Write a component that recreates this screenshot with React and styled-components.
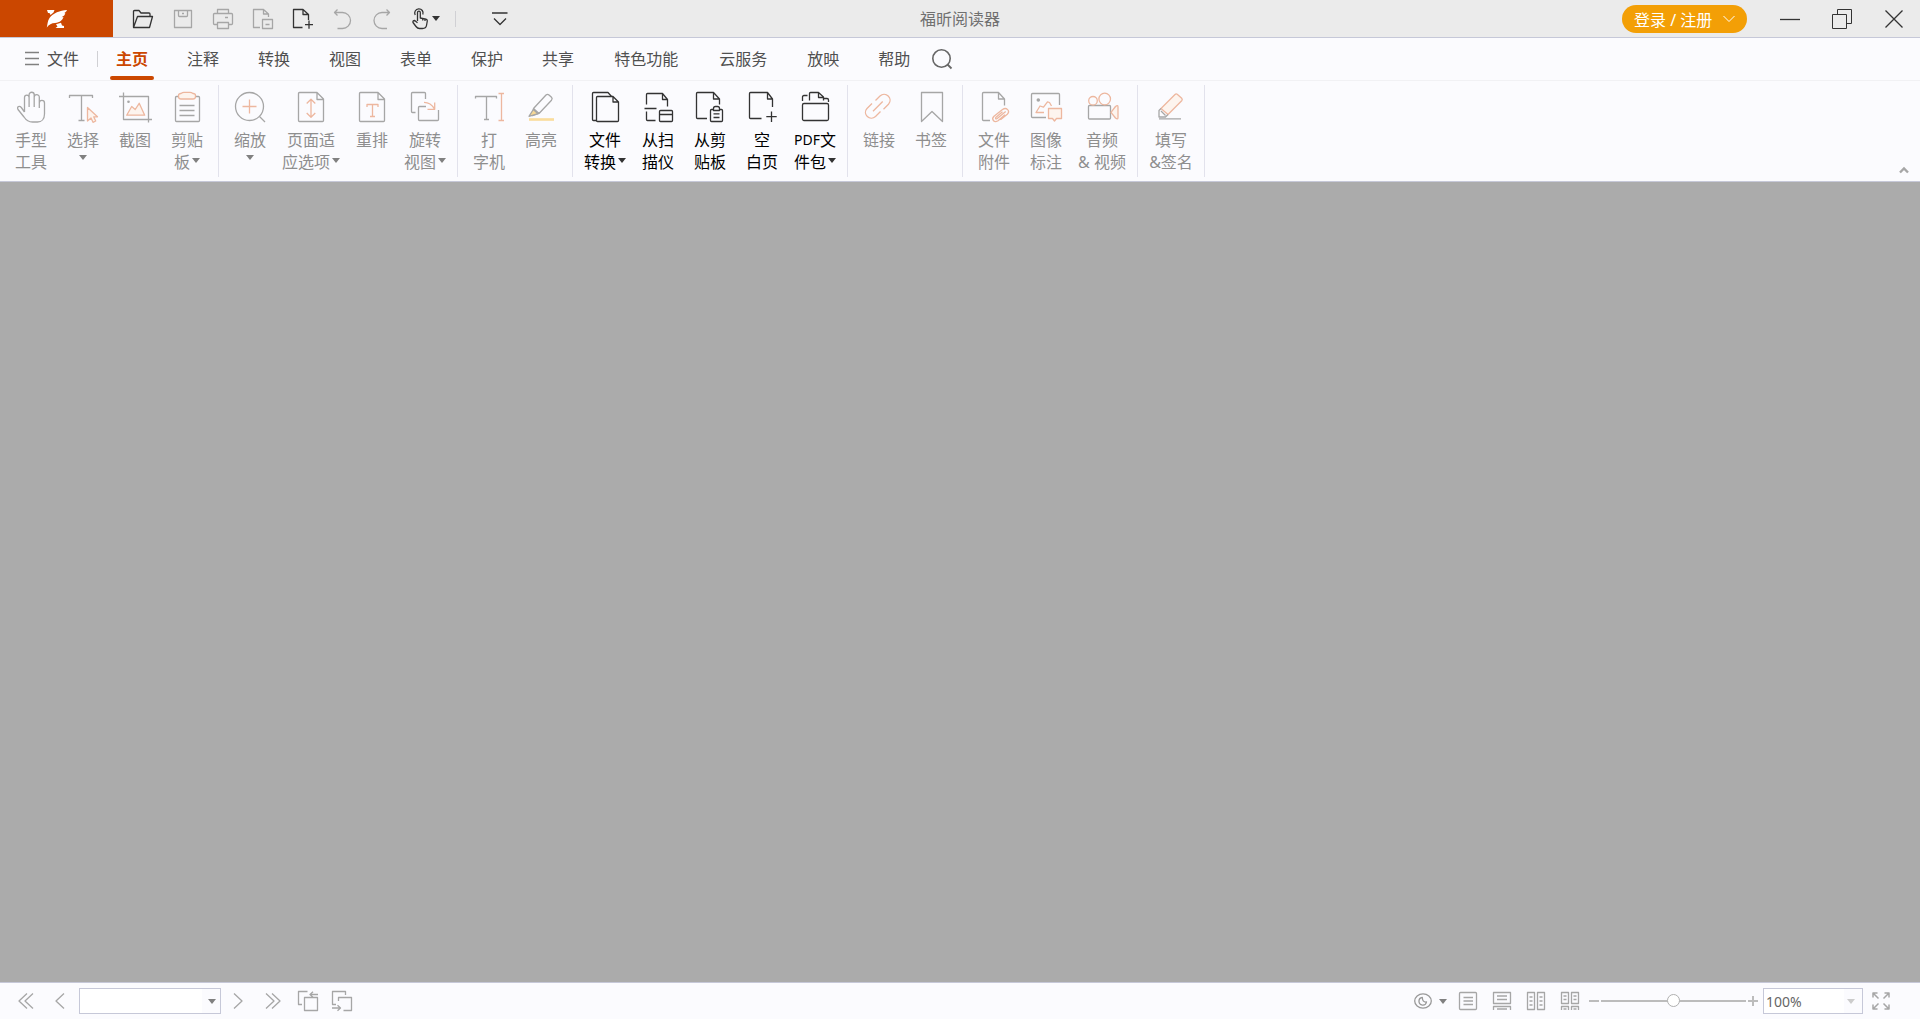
// Librairies.
import React, { useState } from 'react';
import styled, { createGlobalStyle, css } from 'styled-components';


// Colors.
const grey   = '#a6a6a6';
const dark   = '#333333';
const peach  = '#edb79f';
const cream  = '#fdf4ee';
const orange = '#cb4700';
const line   = '#c6c8d8';


// Global Style.
const GlobalStyle = createGlobalStyle`
    * {
        box-sizing: border-box;
    }

    body {
        margin     : 0;
        font-family: "Noto Sans", "Noto Sans CJK SC", sans-serif;
        font-size  : 16px;
        font-weight: 400;
    }
`;


// Styled Components.
const StyledApp = styled.div`
    display       : flex;
    flex-direction: column;
    height        : 100vh;
    background    : #ababab;
`;

const plainButton = css`
    display        : flex;
    align-items    : center;
    justify-content: center;
    padding        : 0;
    border         : 0;
    background     : none;
    color          : inherit;
    font           : inherit;
    white-space    : nowrap;
    cursor         : pointer;
`;

const StyledSvg = styled.svg`
    display        : block;
    flex           : none;
    width          : ${props => props.$w}px;
    height         : ${props => props.$h}px;
    overflow       : visible;
    fill           : none;
    stroke         : ${props => props.$color};
    stroke-width   : 1.3;
    stroke-linejoin: round;
`;

const StyledTitleBar = styled.header`
    display              : grid;
    grid-template-columns: 1fr auto 1fr;
    height               : 38px;
    border-bottom        : 1px solid ${line};
    background           : #ebebeb;
`;

const StyledQuickAccess = styled.div`
    display    : flex;
    align-items: center;
`;

const StyledLogo = styled.div`
    display        : flex;
    align-items    : center;
    justify-content: center;
    align-self     : stretch;
    width          : 113px;
    margin-right   : 10px;
    background     : ${orange};
`;

const StyledToolButton = styled.button`
    ${plainButton}
    width : ${props => props.$width || 40}px;
    height: 36px;
    gap   : ${props => props.$gap || 0}px;
`;

const StyledDivider = styled.span`
    width     : 1px;
    height    : 16px;
    margin    : ${props => props.$margin};
    background: #d0d0d4;
`;

const StyledTitle = styled.h1`
    margin     : 0;
    align-self : center;
    color      : #707070;
    font-size  : 16px;
    font-weight: 400;
    line-height: 24px;
`;

const StyledWindow = styled.div`
    display        : flex;
    align-items    : center;
    justify-content: flex-end;
`;

const StyledLogin = styled.button`
    ${plainButton}
    justify-content: flex-start;
    gap            : 11px;
    height         : 28px;
    width          : 125px;
    padding-left   : 12px;
    margin-right   : 17px;
    border-radius  : 14px;
    background     : #f39f06;
    color          : white;
`;

const StyledMenu = styled.nav`
    display      : flex;
    align-items  : center;
    height       : 43px;
    border-bottom: 1px solid #f1f1f4;
    background   : #fbfbfe;
    color        : #505050;
`;

const StyledFile = styled.button`
    ${plainButton}
    gap           : 8px;
    height        : 42px;
    padding-bottom: 2px;
    margin-left   : 25px;
`;

const StyledTabs = styled.div`
    display: flex;
    gap    : 27px;
`;

const StyledTab = styled.button`
    ${plainButton}
    position   : relative;
    height     : 42px;
    padding    : 0 ${props => props.$long ? 7 : 6}px 2px;
    color      : ${props => props.$active ? orange : 'inherit'};
    font-weight: ${props => props.$active ? 700 : 400};

    &::after {
        content      : '';
        display      : ${props => props.$active ? 'block' : 'none'};
        position     : absolute;
        left         : 0;
        right        : 0;
        bottom       : 0;
        height       : 4px;
        border-radius: 2px;
        background   : ${orange};
    }
`;

const StyledRibbon = styled.section`
    display      : flex;
    height       : 101px;
    border-bottom: 1px solid ${line};
    background   : #fbfbfe;
`;

const StyledGroup = styled.div`
    display     : flex;
    margin      : 4px 0;
    padding     : 0 5px;
    border-right: 1px solid #e2e2ec;
    height      : 92px;
`;

const StyledItem = styled.button`
    ${plainButton}
    flex           : none;
    flex-direction : column;
    justify-content: flex-start;
    width          : ${props => props.$width || 52}px;
    padding-top    : 6px;
    color          : ${props => props.$enabled ? '#000000' : '#8e8e8e'};
`;

const StyledLines = styled.span`
    display       : flex;
    flex-direction: column;
    align-items   : center;
    padding-top   : 6px;
`;

const StyledLine = styled.span`
    display    : flex;
    align-items: center;
    gap        : 2px;
    height     : 22px;
    line-height: 22px;

    > svg {
        margin-bottom: 3px;
    }
`;

const StyledLatin = styled.span`
    margin-right: -2px;
    font-size   : 14px;
`;

const StyledLoneArrow = styled.span`
    padding-top: 4px;
`;

const StyledCollapse = styled.button`
    ${plainButton}
    align-self: flex-end;
    width     : 32px;
    height    : 22px;
    margin    : 0 0 0 auto;
`;

const StyledWorkspace = styled.main`
    flex: 1;
`;

const StyledStatusBar = styled.footer`
    display        : flex;
    align-items    : center;
    justify-content: space-between;
    height         : 37px;
    padding        : 0 21px 0 9px;
    border-top     : 1px solid ${line};
    background     : #fbfbfe;
`;

const StyledStatusGroup = styled.div`
    display    : flex;
    align-items: center;
`;

const StyledCombo = styled.div`
    display    : grid;
    align-items: center;
    width      : ${props => props.$width}px;
    height     : 26px;
    margin-left: ${props => props.$left}px;
    border     : 1px solid ${line};
    background : linear-gradient(to left, #fbfbfe 18px, white 18px);

    > * {
        grid-area: 1 / 1;
    }

    > svg {
        justify-self  : end;
        margin-right  : ${props => props.$arrow}px;
        pointer-events: none;
    }
`;

const StyledSelect = styled.select`
    appearance : none;
    width      : 100%;
    height     : 24px;
    padding    : 0 2px;
    border     : 0;
    background : transparent;
    color      : #666666;
    font-family: inherit;
    font-size  : 14px;
`;

const StyledRange = styled.input`
    appearance: none;
    width     : 145px;
    height    : 14px;
    margin    : 0;
    background: transparent;

    &::-webkit-slider-runnable-track {
        height    : 2px;
        background: #bcbcbc;
    }

    &::-webkit-slider-thumb {
        appearance   : none;
        width        : 13px;
        height       : 13px;
        margin-top   : -6px;
        border       : 1px solid #b0b0b0;
        border-radius: 50%;
        background   : white;
    }
`;


// Icône générique.
function Icon({ w = 34, h = 32, color = grey, children }) {
    return (
        <StyledSvg $w={w} $h={h} $color={color} viewBox={`0 0 ${w} ${h}`} aria-hidden='true'>
            {children}
        </StyledSvg>
    );
}

function Arrow({ color = '#808080' }) {
    return (
        <Icon w={8} h={5} color='none'>
            <path d='M0 0H8L4 5Z' fill={color} />
        </Icon>
    );
}

// Page avec un coin plié.
const page = 'M23 1.5H5.5A1 1 0 0 0 4.5 2.5V29.5A1 1 0 0 0 5.5 30.5H28.5A1 1 0 0 0 29.5 29.5V8L23 1.5V8.5H29.5';

// Icônes du ruban.
const icons = {
    hand: <path d='M10.5 21V6.5A2.3 2.3 0 0 1 15.1 6.5V16M15.1 16V3.8A2.5 2.5 0 0 1 20.2 3.8V16M20.2 6.2A2.5 2.5 0 0 1 25.3 6.2V17M25.3 12A2.6 2.6 0 0 1 30.5 12V23C30.5 28 27.5 31 23.5 31H18.5C14.5 31 12 29 10 26L4 18.5C2.5 15.5 5.5 14.5 7.3 16.5L10.5 21' />,
    select: <>
        <path d='M3.5 7V4.5H26.5V7M15.5 4.5V29.5M12.5 29.5H18.5' />
        <path d='M21.5 16.5V30L25 27L27 31.3L29.7 30L27.7 25.8H31.5Z' stroke={peach} fill={cream} />
    </>,
    crop: <>
        <path d='M1 5.5H30.5V31.5M5.5 1.5V28.5H34' />
        <circle cx='10.5' cy='10.7' r='1.3' fill={grey} stroke='none' />
        <path d='M8.7 24.2L13.7 15.5L17.2 18.5L21.2 12.3L26.7 24.2Z' stroke={peach} fill={cream} />
    </>,
    clipboard: <>
        <rect x='5.5' y='5.5' width='24' height='25' rx='1' />
        <path d='M9.5 14.5H24.5M9.5 19.5H24.5M9.5 24.5H24.5' />
        <path d='M8.5 4.5Q8.5 2.5 11 2.5Q12.5 1.3 14 1.3H20Q21.5 1.3 23 2.5Q25.5 2.5 25.5 4.5V5.5Q25.5 8 23 8H11Q8.5 8 8.5 5.5Z' stroke={peach} fill={cream} />
    </>,
    zoom: <>
        <circle cx='16.5' cy='15.5' r='14' />
        <path d='M26.5 25.5L32 31' />
        <path d='M16.5 8.5V22.5M9.5 15.5H23.5' stroke={peach} />
    </>,
    fit: <>
        <path d={page} />
        <path d='M17 8.5V26M12.7 12.5L17 8.3L21.3 12.5M12.7 22L17 26.2L21.3 22' stroke={peach} />
    </>,
    reflow: <>
        <path d={page} />
        <path d='M12 16V13.5H23V16M17.5 13.5V25.5M15 25.5H20' stroke={peach} />
    </>,
    rotate: <>
        <path d='M7.5 21.5H4.5A1 1 0 0 1 3.5 20.5V2.5A1 1 0 0 1 4.5 1.5H16.5A1 1 0 0 1 17.5 2.5V8M18 15.5H11.5A1 1 0 0 0 10.5 16.5V28.5A1 1 0 0 0 11.5 29.5H29.5A1 1 0 0 0 30.5 28.5V19' />
        <path d='M16 11.3C21 11.3 24 13.5 26.5 18M19.5 18.3H26.7V11.5' stroke={peach} />
    </>,
    typewriter: <>
        <path d='M3.5 7.5V5.5H24.5V7.5M14.5 5.5V28.5M12 28.5H17' />
        <path d='M29.5 2.5V29.5M26.5 2.5H32M26.5 29.5H32' stroke={peach} />
    </>,
    highlight: <>
        <path d='M9.5 17.5L22 4Q23.5 2.7 25 4L27.5 6.3Q28.8 7.6 27.5 9.2L15 22.5L8.5 24.7L9.5 17.5L15 22.5' />
        <path d='M9.3 18.5L5 25.3L14 22.7Z' fill='#f6d896' />
        <path d='M5 28.5H30' stroke='#fadd9c' strokeWidth='2.6' />
    </>,
    convert: <>
        <path d='M8.5 29.5H5.5A1 1 0 0 1 4.5 28.5V2.5A1 1 0 0 1 5.5 1.5H20L23.5 5.5' />
        <path d='M25 5.5H9.5A1 1 0 0 0 8.5 6.5V29.5A1 1 0 0 0 9.5 30.5H29.5A1 1 0 0 0 30.5 29.5V11L25 5.5V11H30.5' />
    </>,
    scanner: <>
        <path d='M5.5 13.5V3.5A1 1 0 0 1 6.5 2.5H21.5L26.5 8.5V15.5M21.5 2.5V8.5H26.5M3.5 17.5H15.5M5.5 20.5V28.5A1 1 0 0 0 6.5 29.5H14.5' />
        <path d='M18.5 20.5A1 1 0 0 1 19.5 19.5H30.5A1 1 0 0 1 31.5 20.5V29.5A1 1 0 0 1 30.5 30.5H19.5A1 1 0 0 1 18.5 29.5ZM18.5 23.5H31.5' />
    </>,
    paste: <>
        <path d='M14 27.5H4.5A1 1 0 0 1 3.5 26.5V2.5A1 1 0 0 1 4.5 1.5H20.5L26.5 8V13.5M20.5 1.5V8H26.5' />
        <path d='M20.5 18.5H18.5A1 1 0 0 0 17.5 19.5V29.5A1 1 0 0 0 18.5 30.5H28.5A1 1 0 0 0 29.5 29.5V19.5A1 1 0 0 0 28.5 18.5H26.5M20.5 19.5V17.5Q20.5 15.5 22.5 15.5H24.5Q26.5 15.5 26.5 17.5V19.5ZM20.5 22.8H26.5M20.5 26.5H26.5' />
    </>,
    blank: <path d='M16.5 27.5H5.5A1 1 0 0 1 4.5 26.5V2.5A1 1 0 0 1 5.5 1.5H22.5L27.5 8V16M22.5 1.5V8H27.5M26.5 20.5V31M21.3 25.7H31.7' />,
    portfolio: <>
        <rect x='4.5' y='12.5' width='26' height='17' rx='1.5' />
        <path d='M4.5 10V6Q4.5 4.5 6 4.5H9.5M11.5 9.5V2.5A1 1 0 0 1 12.5 1.5H20.5L25.5 6V9.5M20.5 1.5V6.5H25.5M26 7.5H29Q30.5 7.5 30.5 9V11' />
    </>,
    link: <path d='M10 12.5L5 17.5C0 23 8 30.5 13.5 25.5L18.5 20.5M13.5 9.5L18 5C23.5 0 31.5 7.5 26.5 13.2L21.5 18.2M11 20.2L20.7 10.5' stroke={peach} />,
    bookmark: <path d='M7.5 1.5H28.5V30.5L18 20.5L7.5 30.5Z' />,
    attach: <>
        <path d='M13 29.5H6.5A1 1 0 0 1 5.5 28.5V2.5A1 1 0 0 1 6.5 1.5H21.5L27.5 8V14.5M21.5 1.5V8H27.5' />
        <path d='M28 23.7L21 29.7C17 32.3 14 28 17 25.2L25.5 18.5C29.5 15.7 33.5 20 30.3 23.2L23.5 28.7M28.7 20.5L20.2 27.5C18.7 28.5 18 27.3 19 26.2L25.5 20.8' stroke={peach} />
    </>,
    image: <>
        <path d='M17 26.5H3.5A1 1 0 0 1 2.5 25.5V3.5A1 1 0 0 1 3.5 2.5H29.5A1 1 0 0 1 30.5 3.5V14' />
        <circle cx='9.3' cy='9' r='1.8' fill={grey} stroke='none' />
        <path d='M15 21.5H7L11 15L14.5 16.2L18.5 10.8L20.5 11.5L22.5 15' stroke={peach} />
        <path d='M19.5 17.5H32.5V27.5H27.5L25.5 30L23.5 27.5H19.5Z' stroke={peach} fill={cream} />
    </>,
    video: <>
        <rect x='3.5' y='14.5' width='22' height='13.5' rx='1' />
        <circle cx='8' cy='9.8' r='4.3' stroke={peach} />
        <circle cx='19.7' cy='8' r='5.8' stroke={peach} />
        <path d='M26 21.3L30.5 15.5Q33 13.5 33 16V26.5Q33 29 30.5 27Z' stroke={peach} fill={cream} />
    </>,
    sign: <>
        <path d='M7 17.5L21 3.5Q22.2 2.3 23.5 3.5L27.7 7.3Q28.8 8.5 27.7 9.7L14 23.5Z' stroke={peach} fill={cream} />
        <path d='M7 17.5L5 19.5V26H11.5L14 23.5M7 20L11.5 24.5M5 27.8H27' />
    </>,
};

// Données du ruban.
const groups = [
    [
        { icon: 'hand', lines: ['手型', '工具'] },
        { icon: 'select', lines: ['选择'], arrow: true },
        { icon: 'crop', lines: ['截图'] },
        { icon: 'clipboard', lines: ['剪贴', '板'], arrow: true },
    ],
    [
        { icon: 'zoom', lines: ['缩放'], arrow: true },
        { icon: 'fit', lines: ['页面适', '应选项'], arrow: true, width: 70 },
        { icon: 'reflow', lines: ['重排'] },
        { icon: 'rotate', lines: ['旋转', '视图'], arrow: true, width: 54 },
    ],
    [
        { icon: 'typewriter', lines: ['打', '字机'] },
        { icon: 'highlight', lines: ['高亮'] },
    ],
    [
        { icon: 'convert', lines: ['文件', '转换'], arrow: true, width: 54, enabled: true },
        { icon: 'scanner', lines: ['从扫', '描仪'], enabled: true },
        { icon: 'paste', lines: ['从剪', '贴板'], enabled: true },
        { icon: 'blank', lines: ['空', '白页'], enabled: true },
        { icon: 'portfolio', lines: [<><StyledLatin>PDF</StyledLatin>文</>, '件包'], arrow: true, width: 54, enabled: true },
    ],
    [
        { icon: 'link', lines: ['链接'] },
        { icon: 'bookmark', lines: ['书签'] },
    ],
    [
        { icon: 'attach', lines: ['文件', '附件'] },
        { icon: 'image', lines: ['图像', '标注'] },
        { icon: 'video', lines: ['音频', '& 视频'], width: 60 },
    ],
    [
        { icon: 'sign', lines: ['填写', '&签名'], width: 56 },
    ],
];

const tabs = ['主页', '注释', '转换', '视图', '表单', '保护', '共享', '特色功能', '云服务', '放映', '帮助'];

// Barre d'accès rapide.
const quickTools = [
    { label: '打开', color: dark, d: 'M1.5 19V3.5A1 1 0 0 1 2.5 2.5H7L9 5H17A1 1 0 0 1 18 6V8.5M1.5 19.5L5.5 8.5H20.5L17.5 19.5Z' },
    { label: '保存', d: 'M2.5 2.5H19.5V19.5H2.5ZM6.5 2.5V7.5A1 1 0 0 0 7.5 8.5H14.5A1 1 0 0 0 15.5 7.5V2.5M10 5.5H12' },
    { label: '打印', d: 'M5.5 16.5H2.5A1 1 0 0 1 1.5 15.5V6.5A1 1 0 0 1 2.5 5.5H19.5A1 1 0 0 1 20.5 6.5V15.5A1 1 0 0 1 19.5 16.5H16.5M5.5 5.5V1.5H16.5V5.5M5.5 14.5H16.5V20.5H5.5ZM13 9.5H16' },
    { label: '另存', d: 'M8 19.5H1.5V1.5H11.5L16.5 6V9M11.5 1.5V6H16.5M10.5 11.5H20.5V20.5H10.5ZM13.5 16.5H17.5' },
    { label: '新建', color: dark, d: 'M10.5 19.5H1.5V1.5H11L16.5 6.5V12M11 1.5V6.5H16.5M17 12.5V20.7M13 16.7H21' },
    { label: '撤销', d: 'M5.5 1.5L2.5 4.5L5.5 7.5M2.5 4.5H10.5A8 8 0 0 1 10.5 20.5H5.5' },
    { label: '重做', d: 'M14.5 1.5L17.5 4.5L14.5 7.5M17.5 4.5H10A8 8 0 0 0 10 20.5H15' },
];

// Vues de page de la barre d'état.
const views = [
    { label: '单页', d: 'M2.5 1.5H17.5Q18.5 1.5 18.5 2.5V17.5Q18.5 18.5 17.5 18.5H2.5Q1.5 18.5 1.5 17.5V2.5Q1.5 1.5 2.5 1.5ZM5.5 6.5H15M5.5 10H15M5.5 13.5H15' },
    { label: '连续', d: 'M1.5 1.5H18.5V12.5H1.5ZM5 5H15M5 8.5H15M1.5 19V15.5H18.5V19M5 18H15' },
    { label: '双页', d: 'M1.5 1.5H8.5V18.5H1.5ZM11.5 1.5H18.5V18.5H11.5ZM3.5 6H6.5M3.5 10H6.5M3.5 14H6.5M13.5 6H16.5M13.5 10H16.5M13.5 14H16.5' },
    { label: '双页连续', d: 'M1.5 1.5H8.5V12.5H1.5ZM11.5 1.5H18.5V12.5H11.5ZM3.5 5H6.5M3.5 8.5H6.5M13.5 5H16.5M13.5 8.5H16.5M1.5 19V15.5H8.5V19M11.5 19V15.5H18.5V19M3.5 18H6.5M13.5 18H16.5' },
];


// Un bouton du ruban.
function RibbonItem({ item }) {
    const last = item.lines.length - 1;

    return (
        <StyledItem $width={item.width} $enabled={item.enabled}>
            <Icon color={item.enabled ? dark : grey}>{icons[item.icon]}</Icon>
            <StyledLines>
                {item.lines.map((text, index) => (
                    <StyledLine key={index}>
                        {text}
                        {item.arrow && last > 0 && index === last &&
                        <Arrow color={item.enabled ? dark : undefined} />
                        }
                    </StyledLine>
                ))}
                {item.arrow && last === 0 &&
                <StyledLoneArrow><Arrow /></StyledLoneArrow>
                }
            </StyledLines>
        </StyledItem>
    );
}


// Application.
function App() {

    // State
    const [activeTab, setActiveTab] = useState('主页');
    const [zoom, setZoom]           = useState(50);

    // Render
    return (
        <StyledApp>
            <GlobalStyle />

            <StyledTitleBar>
                <StyledQuickAccess>
                    <StyledLogo>
                        <Icon w={22} h={20} color='none'>
                            <path fill='white' d='M1 1H8.5L7.5 3.5L4.5 6L3.5 4H2ZM21 1C14 1.5 7 4 3.5 9C1.5 12 1.5 15.5 .8 18.5C3 15.5 5.5 14.2 9 14C14 13.5 16.5 11 17.5 8L15.5 8.3C18 7 19 6 19.3 4L18 4.2C19.5 3.2 20.5 2.5 21 1ZM10 15.3L15 13.8L16 16.5L18 17V19H9.5L11.5 17.5Z' />
                        </Icon>
                    </StyledLogo>
                    {quickTools.map(tool => (
                        <StyledToolButton key={tool.label} aria-label={tool.label}>
                            <Icon w={22} h={22} color={tool.color}><path d={tool.d} /></Icon>
                        </StyledToolButton>
                    ))}
                    <StyledToolButton aria-label='手型' $width={44}>
                        <Icon w={22} h={22} color={dark}>
                            <path d='M7.5 13V4.5A1.4 1.4 0 0 1 10.3 4.5V10L16 11.2Q17.5 11.7 17.3 13L16.5 17.5Q16 20.5 12.5 20.5H9.5Q7.5 20.5 6 18.5L3 14.5Q2.5 12.5 4.7 12.5L7.5 14.7M5.2 7A4.2 4.2 0 1 1 12.8 6.5M12.7 10.7V12.5M15 11.2V13' />
                        </Icon>
                        <Arrow color={dark} />
                    </StyledToolButton>
                    <StyledDivider $margin='0 24px 0 8px' />
                    <StyledToolButton aria-label='自定义'>
                        <Icon w={18} h={16} color={dark}>
                            <path d='M1 2H16.5M3 7.5L9 13.5L15 7.5' />
                        </Icon>
                    </StyledToolButton>
                </StyledQuickAccess>
                <StyledTitle>福昕阅读器</StyledTitle>
                <StyledWindow>
                    <StyledLogin>
                        登录 / 注册
                        <Icon w={12} h={8} color='white'><path d='M.5 1L6 6.5L11.5 1' strokeWidth='1' /></Icon>
                    </StyledLogin>
                    <StyledToolButton aria-label='最小化' $width={52}>
                        <Icon w={20} h={20} color={dark}><path d='M0 10.5H20' /></Icon>
                    </StyledToolButton>
                    <StyledToolButton aria-label='还原' $width={52}>
                        <Icon w={20} h={20} color={dark}><path d='M.5 5.5H14.5V19.5H.5ZM5.5 5.5V.5H19.5V14.5H14.5' strokeWidth='1' /></Icon>
                    </StyledToolButton>
                    <StyledToolButton aria-label='关闭' $width={52}>
                        <Icon w={18} h={18} color={dark}><path d='M.5 .5L17.5 17.5M17.5 .5L.5 17.5' /></Icon>
                    </StyledToolButton>
                </StyledWindow>
            </StyledTitleBar>

            <StyledMenu>
                <StyledFile>
                    <Icon w={14} h={13} color='#808080'><path d='M0 .5H14M0 6.5H14M0 12.5H14' /></Icon>
                    文件
                </StyledFile>
                <StyledDivider $margin='0 12px 0 18px' />
                <StyledTabs>
                    {tabs.map(tab => (
                        <StyledTab
                            key={tab}
                            $active={tab === activeTab}
                            $long={tab.length > 2}
                            onClick={() => setActiveTab(tab)}
                        >
                            {tab}
                        </StyledTab>
                    ))}
                </StyledTabs>
                <StyledToolButton aria-label='搜索' $width={52}>
                    <Icon w={20} h={20} color='#666666'>
                        <circle cx='9.5' cy='9.5' r='8.7' strokeWidth='1.6' />
                        <path d='M15.5 15.5L19.5 19.5' strokeWidth='1.8' />
                    </Icon>
                </StyledToolButton>
            </StyledMenu>

            <StyledRibbon>
                {groups.map((group, index) => (
                    <StyledGroup key={index}>
                        {group.map(item => <RibbonItem key={item.icon} item={item} />)}
                    </StyledGroup>
                ))}
                <StyledCollapse aria-label='折叠功能区'>
                    <Icon w={10} h={6}><path d='M1 5.5L5 1.5L9 5.5' strokeWidth='2.4' strokeLinejoin='miter' /></Icon>
                </StyledCollapse>
            </StyledRibbon>

            <StyledWorkspace />

            <StyledStatusBar>
                <StyledStatusGroup>
                    <StyledToolButton aria-label='首页' $width={34}>
                        <Icon w={16} h={16}><path d='M9 .5L1 8L9 15.5M15 .5L7 8L15 15.5' /></Icon>
                    </StyledToolButton>
                    <StyledToolButton aria-label='上一页' $width={34}>
                        <Icon w={10} h={16}><path d='M9 .5L1 8L9 15.5' /></Icon>
                    </StyledToolButton>
                    <StyledCombo $width={142} $left={2} $arrow={4}>
                        <StyledSelect aria-label='页码' />
                        <Arrow />
                    </StyledCombo>
                    <StyledToolButton aria-label='下一页' $width={34}>
                        <Icon w={10} h={16}><path d='M1 .5L9 8L1 15.5' /></Icon>
                    </StyledToolButton>
                    <StyledToolButton aria-label='末页' $width={36}>
                        <Icon w={16} h={16}><path d='M1 .5L9 8L1 15.5M7 .5L15 8L7 15.5' /></Icon>
                    </StyledToolButton>
                    <StyledToolButton aria-label='上一视图' $width={34}>
                        <Icon w={20} h={20}>
                            <path d='M6.5 6.5H19.5V19.5H6.5ZM4 13.5H.5V.5H9.5M20 3.5H12M15 .8L12 3.5L15 6.2' />
                        </Icon>
                    </StyledToolButton>
                    <StyledToolButton aria-label='下一视图' $width={34}>
                        <Icon w={20} h={20}>
                            <path d='M6.5 10V6.5H19.5V19.5H11.5M4 13.5H.5V.5H13.5V4M0 17H8.5M5.5 14.3L8.5 17L5.5 19.7' />
                        </Icon>
                    </StyledToolButton>
                </StyledStatusGroup>

                <StyledStatusGroup>
                    <StyledToolButton aria-label='护眼模式' $width={42} $gap={7}>
                        <Icon w={18} h={16} color='#999999'>
                            <ellipse cx='9' cy='8' rx='8.3' ry='7.2' />
                            <path d='M8.3 4.5A3.8 3.8 0 1 0 12.5 9Q8.5 9.5 8.3 4.5Z' />
                        </Icon>
                        <Arrow />
                    </StyledToolButton>
                    {views.map(view => (
                        <StyledToolButton key={view.label} aria-label={view.label} $width={34}>
                            <Icon w={20} h={20}><path d={view.d} /></Icon>
                        </StyledToolButton>
                    ))}
                    <StyledToolButton aria-label='缩小' $width={14}>
                        <Icon w={10} h={10} color='#bcbcbc'><path d='M0 5H10' strokeWidth='2' /></Icon>
                    </StyledToolButton>
                    <StyledRange
                        type='range'
                        aria-label='缩放比例'
                        value={zoom}
                        onChange={event => setZoom(event.target.value)}
                    />
                    <StyledToolButton aria-label='放大' $width={14}>
                        <Icon w={10} h={10} color='#bcbcbc'><path d='M0 5H10M5 0V10' strokeWidth='2' /></Icon>
                    </StyledToolButton>
                    <StyledCombo $width={100} $left={3} $arrow={7}>
                        <StyledSelect aria-label='缩放'>
                            <option>100%</option>
                        </StyledSelect>
                        <Arrow color='#cccccc' />
                    </StyledCombo>
                    <StyledToolButton aria-label='全屏' $width={36}>
                        <Icon w={18} h={18}>
                            <path d='M1 5.5V1H5.5M1 1L6.5 6.5M12.5 1H17V5.5M17 1L11.5 6.5M1 12.5V17H5.5M1 17L6.5 11.5M12.5 17H17V12.5M17 17L11.5 11.5' strokeWidth='1.5' />
                        </Icon>
                    </StyledToolButton>
                </StyledStatusGroup>
            </StyledStatusBar>
        </StyledApp>
    );
};

export default App;
